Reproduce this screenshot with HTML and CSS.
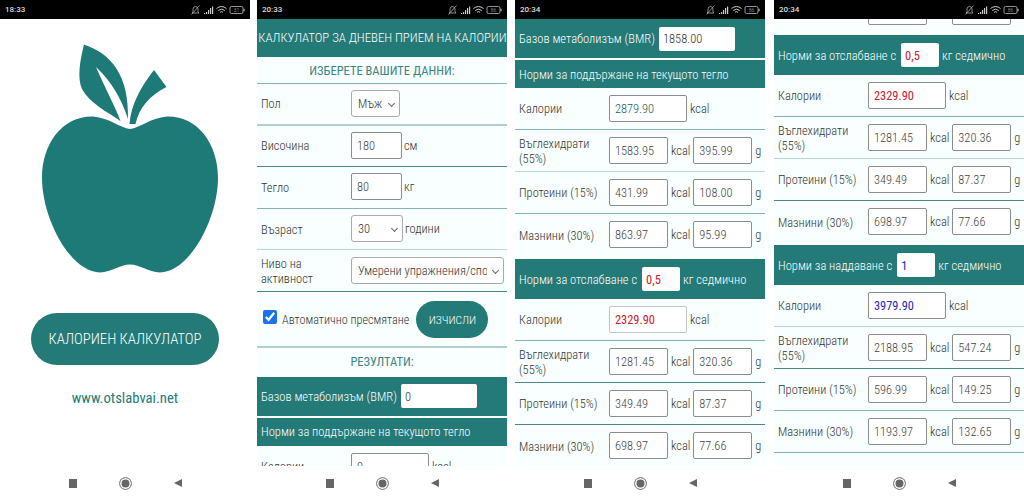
FILE: index.html
```html
<!DOCTYPE html>
<html lang="bg">

<head>
    <meta charset="UTF-8">
    <meta name="viewport" content="width=device-width, initial-scale=1.0">
    <title>Калориен калкулатор</title>

    <link rel="stylesheet" href="styles.css">
</head>

<body>
    <div class="phones">

        <!-- splash -->
        <div class="phone">
            <div class="status">
                <span class="time">18:33</span>
                <svg class="status-icons" viewBox="0 0 56 10"><path d="M3 8 L4 7 V4 Q4 1.6 6.500 1.6 Q9 1.6 9 4 V7 L10 8 Z M2.500 9.500 L10.500 .5" fill="none" stroke="#aaa" stroke-width=".8"/><path d="M15 8h1.2v1H15zM17 7h1.2v2H17zM19 5h1.2v4H19zM21 3h1.2v6H21zM23 1.5h1.2V9H23z" fill="#ccc"/><path d="M27.500 3.500 Q32.500 -.5 37.500 3.500 M29.200 5.500 Q32.500 2.800 35.800 5.500 M31 7.300 Q32.500 6 34 7.300" fill="none" stroke="#ccc" stroke-width="1"/><rect x="41" y="1.500" width="13" height="7" rx="1.500" fill="none" stroke="#bbb" stroke-width=".8"/><rect x="54.400" y="3.800" width="1.200" height="2.400" fill="#bbb"/><text x="47.500" y="7.300" class="battery-text">31</text></svg>
            </div>
            <div class="screen splash">
                <svg class="apple" viewBox="0 0 180 232">
                    <path d="M90 87 C80 86 70 76 53 74.500 C22 74 2 102 2 136 C2 176 30 230 60 230.500 C72 230 80 222.500 90 222.500 C100 222.500 108 230 120 230.500 C150 230 178 176 178 136 C178 102 158 74 127 74.500 C110 76 100 86 90 87 Z" fill="#1e7a77"/>
                    <path d="M44 2.500 C72 12 89 34 88 77 C82 58 72 40 56 25 C64 44 74 62 80.500 79 C68 70 50 62 42 47 C37 36 40 18 44 2.500 Z" fill="#1e7a77"/>
                    <path d="M89.500 82 C91 63 100 46 114 28 L126.500 45 C110 53 99 66 95.500 82 Z" fill="#1e7a77"/>
                </svg>
                <button class="start-btn">КАЛОРИЕН КАЛКУЛАТОР</button>
                <div class="site">www.otslabvai.net</div>
            </div>
            <div class="nav"><span class="nav-square"></span><span class="nav-circle"></span><span class="nav-back"></span></div>
        </div>

        <!-- form -->
        <div class="phone phone-2">
            <div class="status">
                <span class="time">20:33</span>
                <svg class="status-icons" viewBox="0 0 56 10"><path d="M3 8 L4 7 V4 Q4 1.6 6.500 1.6 Q9 1.6 9 4 V7 L10 8 Z M2.500 9.500 L10.500 .5" fill="none" stroke="#aaa" stroke-width=".8"/><path d="M15 8h1.2v1H15zM17 7h1.2v2H17zM19 5h1.2v4H19zM21 3h1.2v6H21zM23 1.5h1.2V9H23z" fill="#ccc"/><path d="M27.500 3.500 Q32.500 -.5 37.500 3.500 M29.200 5.500 Q32.500 2.800 35.800 5.500 M31 7.300 Q32.500 6 34 7.300" fill="none" stroke="#ccc" stroke-width="1"/><rect x="41" y="1.500" width="13" height="7" rx="1.500" fill="none" stroke="#bbb" stroke-width=".8"/><rect x="54.400" y="3.800" width="1.200" height="2.400" fill="#bbb"/><text x="47.500" y="7.300" class="battery-text">86</text></svg>
            </div>
            <div class="screen">
                <div class="app-title">КАЛКУЛАТОР ЗА ДНЕВЕН ПРИЕМ НА КАЛОРИИ</div>
                <div class="section-title line-mid">ИЗБЕРЕТЕ ВАШИТЕ ДАННИ:</div>
                <div class="row form-row line-thick">
                    <div class="label">Пол</div>
                    <span class="sel-wrap"><select class="sel sel-sex"><option>Мъж</option></select></span>
                </div>
                <div class="row form-row line-dark">
                    <div class="label">Височина</div>
                    <input class="field field-short" value="180"><span class="unit unit-tight">см</span>
                </div>
                <div class="row form-row line-mid">
                    <div class="label">Тегло</div>
                    <input class="field field-short" value="80"><span class="unit unit-tight">кг</span>
                </div>
                <div class="row form-row line-light">
                    <div class="label">Възраст</div>
                    <span class="sel-wrap"><select class="sel sel-age"><option>30</option></select></span><span class="unit unit-tight">години</span>
                </div>
                <div class="row form-row line-dark">
                    <div class="label">Ниво на активност</div>
                    <span class="sel-wrap"><select class="sel sel-level"><option>Умерени упражнения/спорт</option></select></span>
                </div>
                <div class="auto-row line-thick">
                    <input type="checkbox" class="auto-check" checked>
                    <span class="auto-label">Автоматично пресмятане</span>
                    <button class="calc-btn">ИЗЧИСЛИ</button>
                </div>
                <div class="section-title results-title">РЕЗУЛТАТИ:</div>
                <div class="band band-bmr">Базов метаболизъм (BMR)<input class="band-field band-field-bmr" value="0"></div>
                <div class="band band-gap">Норми за поддържане на текущото тегло</div>
                <div class="row">
                    <div class="label">Калории</div>
                    <input class="field field-cal" value="0"><span class="unit">kcal</span>
                </div>
            </div>
            <div class="nav"><span class="nav-square"></span><span class="nav-circle"></span><span class="nav-back"></span></div>
        </div>

        <!-- results, top part -->
        <div class="phone phone-3">
            <div class="status">
                <span class="time">20:34</span>
                <svg class="status-icons" viewBox="0 0 56 10"><path d="M3 8 L4 7 V4 Q4 1.6 6.500 1.6 Q9 1.6 9 4 V7 L10 8 Z M2.500 9.500 L10.500 .5" fill="none" stroke="#aaa" stroke-width=".8"/><path d="M15 8h1.2v1H15zM17 7h1.2v2H17zM19 5h1.2v4H19zM21 3h1.2v6H21zM23 1.5h1.2V9H23z" fill="#ccc"/><path d="M27.500 3.500 Q32.500 -.5 37.500 3.500 M29.200 5.500 Q32.500 2.800 35.800 5.500 M31 7.300 Q32.500 6 34 7.300" fill="none" stroke="#ccc" stroke-width="1"/><rect x="41" y="1.500" width="13" height="7" rx="1.500" fill="none" stroke="#bbb" stroke-width=".8"/><rect x="54.400" y="3.800" width="1.200" height="2.400" fill="#bbb"/><text x="47.500" y="7.300" class="battery-text">86</text></svg>
            </div>
            <div class="screen">
                <div class="band band-bmr">Базов метаболизъм (BMR)<input class="band-field band-field-bmr" value="1858.00"></div>
                <div class="band band-gap">Норми за поддържане на текущото тегло</div>
                <div class="row line-mid">
                    <div class="label">Калории</div>
                    <input class="field field-cal text-teal" value="2879.90"><span class="unit">kcal</span>
                </div>
                <div class="row line-light">
                    <div class="label">Въглехидрати (55%)</div>
                    <input class="field field-num" value="1583.95"><span class="unit">kcal</span><input class="field field-num" value="395.99"><span class="unit">g</span>
                </div>
                <div class="row line-mid">
                    <div class="label">Протеини (15%)</div>
                    <input class="field field-num" value="431.99"><span class="unit">kcal</span><input class="field field-num" value="108.00"><span class="unit">g</span>
                </div>
                <div class="row">
                    <div class="label">Мазнини (30%)</div>
                    <input class="field field-num" value="863.97"><span class="unit">kcal</span><input class="field field-num" value="95.99"><span class="unit">g</span>
                </div>
                <div class="band band-tall band-gap-wide">Норми за отслабване с<input class="band-field band-field-kg text-red" value="0,5">кг седмично</div>
                <div class="row line-mid">
                    <div class="label">Калории</div>
                    <input class="field field-cal field-pale text-red" value="2329.90"><span class="unit">kcal</span>
                </div>
                <div class="row line-dark">
                    <div class="label">Въглехидрати (55%)</div>
                    <input class="field field-num" value="1281.45"><span class="unit">kcal</span><input class="field field-num" value="320.36"><span class="unit">g</span>
                </div>
                <div class="row line-dark">
                    <div class="label">Протеини (15%)</div>
                    <input class="field field-num" value="349.49"><span class="unit">kcal</span><input class="field field-num" value="87.37"><span class="unit">g</span>
                </div>
                <div class="row">
                    <div class="label">Мазнини (30%)</div>
                    <input class="field field-num" value="698.97"><span class="unit">kcal</span><input class="field field-num" value="77.66"><span class="unit">g</span>
                </div>
            </div>
            <div class="nav"><span class="nav-square"></span><span class="nav-circle"></span><span class="nav-back"></span></div>
        </div>

        <!-- results, scrolled down -->
        <div class="phone phone-4">
            <div class="status">
                <span class="time">20:34</span>
                <svg class="status-icons" viewBox="0 0 56 10"><path d="M3 8 L4 7 V4 Q4 1.6 6.500 1.6 Q9 1.6 9 4 V7 L10 8 Z M2.500 9.500 L10.500 .5" fill="none" stroke="#aaa" stroke-width=".8"/><path d="M15 8h1.2v1H15zM17 7h1.2v2H17zM19 5h1.2v4H19zM21 3h1.2v6H21zM23 1.5h1.2V9H23z" fill="#ccc"/><path d="M27.500 3.500 Q32.500 -.5 37.500 3.500 M29.200 5.500 Q32.500 2.800 35.800 5.500 M31 7.300 Q32.500 6 34 7.300" fill="none" stroke="#ccc" stroke-width="1"/><rect x="41" y="1.500" width="13" height="7" rx="1.500" fill="none" stroke="#bbb" stroke-width=".8"/><rect x="54.400" y="3.800" width="1.200" height="2.400" fill="#bbb"/><text x="47.500" y="7.300" class="battery-text">86</text></svg>
            </div>
            <div class="screen">
                <div class="scrolled">
                    <div class="row">
                        <div class="label"></div>
                        <input class="field field-num"><span class="unit unit-hidden">kcal</span><input class="field field-num"><span class="unit unit-hidden">g</span>
                    </div>
                    <div class="band band-tall band-gap">Норми за отслабване с<input class="band-field band-field-kg text-red" value="0,5">кг седмично</div>
                    <div class="row line-mid">
                        <div class="label">Калории</div>
                        <input class="field field-cal text-red" value="2329.90"><span class="unit">kcal</span>
                    </div>
                    <div class="row line-light">
                        <div class="label">Въглехидрати (55%)</div>
                        <input class="field field-num" value="1281.45"><span class="unit">kcal</span><input class="field field-num" value="320.36"><span class="unit">g</span>
                    </div>
                    <div class="row line-dark">
                        <div class="label">Протеини (15%)</div>
                        <input class="field field-num" value="349.49"><span class="unit">kcal</span><input class="field field-num" value="87.37"><span class="unit">g</span>
                    </div>
                    <div class="row">
                        <div class="label">Мазнини (30%)</div>
                        <input class="field field-num" value="698.97"><span class="unit">kcal</span><input class="field field-num" value="77.66"><span class="unit">g</span>
                    </div>
                    <div class="band band-tall band-gap">Норми за наддаване с<input class="band-field band-field-kg text-blue" value="1">кг седмично</div>
                    <div class="row line-light">
                        <div class="label">Калории</div>
                        <input class="field field-cal text-blue" value="3979.90"><span class="unit">kcal</span>
                    </div>
                    <div class="row line-dark">
                        <div class="label">Въглехидрати (55%)</div>
                        <input class="field field-num" value="2188.95"><span class="unit">kcal</span><input class="field field-num" value="547.24"><span class="unit">g</span>
                    </div>
                    <div class="row line-mid">
                        <div class="label">Протеини (15%)</div>
                        <input class="field field-num" value="596.99"><span class="unit">kcal</span><input class="field field-num" value="149.25"><span class="unit">g</span>
                    </div>
                    <div class="row line-mid">
                        <div class="label">Мазнини (30%)</div>
                        <input class="field field-num" value="1193.97"><span class="unit">kcal</span><input class="field field-num" value="132.65"><span class="unit">g</span>
                    </div>
                </div>
            </div>
            <div class="nav"><span class="nav-square"></span><span class="nav-circle"></span><span class="nav-back"></span></div>
        </div>

    </div>
</body>

</html>
```

FILE: styles.css
```css
* {
    box-sizing: border-box;
}

body {
    margin: 0;
    background-color: #fff;
    font-family: "Roboto Condensed", "Liberation Sans Narrow", Roboto, sans-serif;
    font-weight: 300;
    color: #333;
}

.phones {
    display: flex;
    width: 1024px;
    height: 500px;
    overflow: hidden;
}

.phone {
    display: flex;
    flex-direction: column;
    flex: none;
    width: 250px;
    height: 500px;
}

.phone-2 {
    margin-left: 7px;
}

.phone-3 {
    margin-left: 8px;
}

.phone-4 {
    margin-left: 9px;
}

/* status bar */
.status {
    display: flex;
    align-items: center;
    justify-content: space-between;
    flex: none;
    height: 19px;
    padding: 0 5px;
    background-color: #000;
}

.time {
    font-family: Roboto, sans-serif;
    font-size: 8px;
    font-weight: 500;
    color: #ddd;
}

.status-icons {
    width: 56px;
    height: 10px;
}

.battery-text {
    font-family: Roboto, sans-serif;
    font-size: 5px;
    fill: #bbb;
    text-anchor: middle;
}

/* scrollable part */
.screen {
    flex: none;
    height: 447px;
    overflow: hidden;
    background-color: #f8fffe;
}

.scrolled {
    margin-top: -28px;
}

/* splash */
.splash {
    display: flex;
    flex-direction: column;
    align-items: center;
    background-color: #fff;
}

.apple {
    flex: none;
    width: 180px;
    height: 232px;
    margin: 23px 0 0 10px;
}

.start-btn {
    width: 188px;
    height: 52px;
    margin-top: 39px;
    border: 0;
    border-radius: 26px;
    background-color: #237a77;
    font-family: inherit;
    font-size: 14.800px;
    font-weight: 300;
    color: #fff;
}

.site {
    margin-top: 24px;
    font-size: 14.700px;
    font-weight: 400;
    color: #237a77;
}

/* form */
.app-title {
    height: 38px;
    padding-left: 1px;
    background-color: #237a77;
    font-size: 12.800px;
    line-height: 38px;
    text-align: center;
    white-space: nowrap;
    color: #fff;
}

.section-title {
    height: 27px;
    font-size: 12.500px;
    font-weight: 400;
    line-height: 27px;
    text-align: center;
    color: #3b8582;
}

.results-title {
    height: 29px;
}

.row {
    display: flex;
    align-items: center;
    height: 42px;
    padding: 0 0 1px 4px;
}

.form-row {
    height: 41.600px;
}

.label {
    flex: none;
    width: 90px;
    padding-top: 1px;
    font-size: 12.400px;
    line-height: 15px;
}

.unit {
    flex: none;
    margin: 0 3px;
    font-size: 12.400px;
}

.unit-tight {
    margin-left: 2px;
}

.unit-hidden {
    visibility: hidden;
}

.field {
    flex: none;
    height: 27px;
    padding: 0 5px;
    border: 1px solid #8c8c8c;
    border-radius: 2px;
    background-color: #fff;
    font-family: inherit;
    font-size: 12.400px;
    font-weight: 300;
    color: #444;
}

.field-short {
    width: 51px;
}

.field-cal {
    width: 78px;
}

.field-num {
    width: 59px;
}

.field-pale {
    border-color: #c4c4c4;
}

/* select with a small chevron of its own */
.sel-wrap {
    position: relative;
    flex: none;
    display: flex;
}

.sel-wrap::after {
    content: "";
    position: absolute;
    top: 11px;
    right: 6px;
    width: 4px;
    height: 4px;
    border-right: 1px solid #666;
    border-bottom: 1px solid #666;
    transform: rotate(45deg);
    pointer-events: none;
}

.sel {
    height: 27px;
    padding: 0 16px 0 6px;
    border: 1px solid #aaa;
    border-radius: 3px;
    background-color: #fff;
    appearance: none;
    font-family: inherit;
    font-size: 12.400px;
    font-weight: 300;
    color: #333;
}

.sel-sex {
    width: 49px;
}

.sel-age {
    width: 52px;
}

.sel-level {
    width: 153px;
}

.auto-row {
    display: flex;
    align-items: center;
    height: 56px;
    padding: 2px 0 0 6px;
}

.auto-check {
    flex: none;
    width: 14px;
    height: 14px;
    margin: 0 5px 5px 0;
    accent-color: #1a73e8;
}

.auto-label {
    flex: none;
    font-size: 12.200px;
}

.calc-btn {
    flex: none;
    width: 72px;
    height: 37px;
    margin-left: 7px;
    border: 0;
    border-radius: 19px;
    background-color: #237a77;
    font-family: inherit;
    font-size: 11.500px;
    font-weight: 300;
    color: #fff;
}

/* teal bands */
.band {
    display: flex;
    align-items: center;
    height: 28px;
    padding-left: 4px;
    background-color: #237a77;
    font-size: 12.500px;
    white-space: nowrap;
    color: #fff;
}

.band-tall {
    height: 40px;
}

.band-bmr {
    height: 39px;
}

.band-gap {
    margin-top: 2px;
}

.band-gap-wide {
    margin-top: 3px;
}

.band-field {
    flex: none;
    height: 24px;
    padding: 0 4px;
    border: 0;
    border-radius: 2px;
    background-color: #fff;
    font-family: inherit;
    font-size: 12.500px;
    font-weight: 300;
    color: #333;
}

.band-field-bmr {
    width: 76px;
    margin-left: 4px;
}

.band-field-kg {
    width: 38px;
    margin: 0 3px 0 5px;
    font-weight: 500;
}

/* row lines, they come out uneven in the screenshot */
.line-light {
    border-bottom: 1px solid #b7d8d5;
}

.line-mid {
    border-bottom: 1px solid #84b5b3;
}

.line-dark {
    border-bottom: 1px solid #4b8785;
}

.line-thick {
    border-bottom: 2px solid #afd0ce;
}

.text-teal {
    color: #0f6360;
}

.text-red {
    color: #c8202c;
    font-weight: 400;
}

.text-blue {
    color: #2a2ab4;
    font-weight: 400;
}

/* android nav */
.nav {
    display: flex;
    align-items: center;
    justify-content: center;
    gap: 42px;
    flex: none;
    height: 34px;
    background-color: #fff;
}

.nav-square {
    width: 8px;
    height: 9px;
    background-color: #666;
}

.nav-circle {
    width: 13px;
    height: 13px;
    border: 1px solid #888;
    border-radius: 50%;
    background-color: #666;
    box-shadow: inset 0 0 0 1.500px #fff;
}

.nav-back {
    width: 0;
    height: 0;
    border-top: 4.500px solid transparent;
    border-bottom: 4.500px solid transparent;
    border-right: 8px solid #666;
}
```
